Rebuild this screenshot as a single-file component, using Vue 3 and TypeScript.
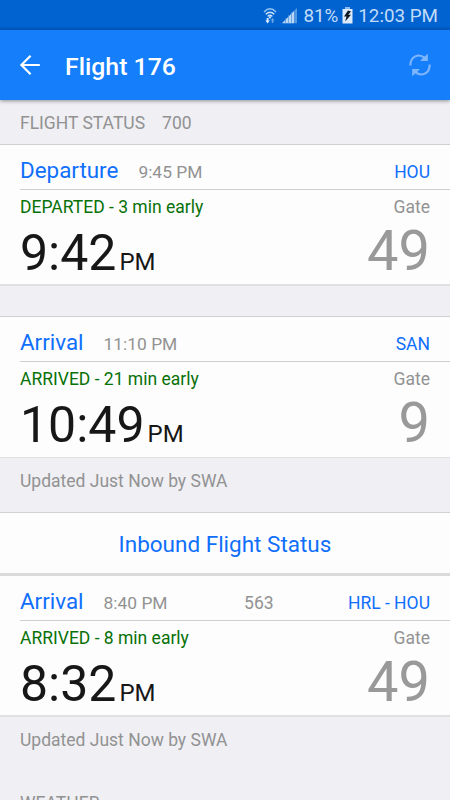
<script setup lang="ts">
interface Leg {
  kind: string
  scheduled: string
  flight?: string
  airport: string
  status: string
  time: string
  gate: string
  variant: string
}

const departure: Leg = {
  kind: 'Departure', scheduled: '9:45 PM', airport: 'HOU',
  status: 'DEPARTED - 3 min early', time: '9:42', gate: '49', variant: 'departure',
}
const arrival: Leg = {
  kind: 'Arrival', scheduled: '11:10 PM', airport: 'SAN',
  status: 'ARRIVED - 21 min early', time: '10:49', gate: '9', variant: 'arrival',
}
const inbound: Leg = {
  kind: 'Arrival', scheduled: '8:40 PM', flight: '563', airport: 'HRL - HOU',
  status: 'ARRIVED - 8 min early', time: '8:32', gate: '49', variant: 'inbound',
}

type Block =
  | { type: 'leg'; leg: Leg }
  | { type: 'gap' }
  | { type: 'note'; text: string }
  | { type: 'link'; text: string }

const blocks: Block[] = [
  { type: 'leg', leg: departure },
  { type: 'gap' },
  { type: 'leg', leg: arrival },
  { type: 'note', text: 'Updated Just Now by SWA' },
  { type: 'link', text: 'Inbound Flight Status' },
  { type: 'leg', leg: inbound },
  { type: 'note', text: 'Updated Just Now by SWA' },
]
</script>

<template>
  <div class="screen">
    <div class="status-bar">
      <svg class="wifi" width="14" height="18" viewBox="0 0 14 18" fill="none">
        <path d="M1 5Q7 -1.4 13 5" stroke="#8fc0f3" stroke-width="1.5" />
        <path d="M2.8 7.3Q7 3 11.2 7.3" stroke="#c9e2fa" stroke-width="1.5" />
        <path d="M4.7 9.4Q7 7 9.3 9.4" stroke="#c9e2fa" stroke-width="1.4" />
        <circle cx="7" cy="10.4" r="1.1" fill="#d6eafc" />
        <path d="M3.6 11h2v2.6h1.3l-2.3 2.8-2.3-2.8h1.3z" fill="#d6eafc" />
        <path d="M8.8 16h1.6v-2.4h1.2L9.6 11l-2 2.6h1.2z" fill="#68a5e8" />
      </svg>
      <svg class="signal" width="16" height="16" viewBox="0 0 16 16">
        <path d="M0 15.3 12.4 2.6v12.7z" fill="#b9d7f5" />
        <path d="M12.4 2.6 15 0v15.3h-2.6z" fill="#5598e2" />
        <path d="M3.5 10v6M6.5 7v9M9.5 4v12" stroke="#4d91df" stroke-width=".7" />
      </svg>
      <span class="percent">81%</span>
      <svg class="battery" width="11" height="17" viewBox="0 0 11 17">
        <path d="M3 0h5v2H3z" fill="#8abaf0" />
        <path d="M.5 2h10v14.5H.5z" fill="#dcebfb" />
        <path d="M6 3.5 2 9.4h2.5L3.2 14.5 9 7.7H6.2L9 4.5z" fill="#10161f" />
      </svg>
      <span class="clock">12:03 PM</span>
    </div>

    <header class="app-bar">
      <svg class="back" width="22" height="22" viewBox="0 0 22 22" fill="none" stroke="#fff" stroke-width="2.2">
        <path d="M20.8 11H2.4M11.6 1.8 2.4 11l9.2 9.2" />
      </svg>
      <h1>Flight 176</h1>
      <svg class="refresh" width="22" height="24" viewBox="0 0 22 24">
        <g fill="none" stroke="#7eb6fd" stroke-width="2.2">
          <path d="M1.3 12.6C1.3 3.2 9.6 0 15.6 4.8" />
          <path d="M20.7 11.4C20.7 20.8 12.4 24 6.4 19.2" />
        </g>
        <path d="M18.8 .8V8H11.2L13.4 5.4z" fill="#7eb6fd" />
        <path d="M3.2 23.2V16h7.6L8.6 18.6z" fill="#7eb6fd" />
      </svg>
    </header>

    <main>
      <div class="section-head"><span>FLIGHT STATUS</span><span>700</span></div>
      <template v-for="(block, i) in blocks" :key="i">
        <section v-if="block.type === 'leg'" class="leg" :class="block.leg.variant">
          <div class="leg-head">
            <span class="kind">{{ block.leg.kind }}</span>
            <span class="scheduled">{{ block.leg.scheduled }}</span>
            <span v-if="block.leg.flight" class="flight">{{ block.leg.flight }}</span>
            <span class="airport">{{ block.leg.airport }}</span>
          </div>
          <div class="leg-body">
            <div class="line">
              <span class="state">{{ block.leg.status }}</span>
              <span class="gate-label">Gate</span>
            </div>
            <div class="figures">
              <span class="time">{{ block.leg.time }}<small>PM</small></span>
              <span class="gate">{{ block.leg.gate }}</span>
            </div>
          </div>
        </section>
        <div v-else-if="block.type === 'gap'" class="gap"></div>
        <p v-else-if="block.type === 'note'" class="note">{{ block.text }}</p>
        <a v-else class="link">{{ block.text }}</a>
      </template>
      <div class="section-head weather">WEATHER</div>
    </main>
  </div>
</template>

<style>
body {
  margin: 0;
  overflow: hidden;
}
</style>

<style scoped>
.screen {
  width: 450px;
  height: 800px;
  overflow: hidden;
  background: #efeff4;
  color: #929292;
  font: 17.5px/22px Roboto, sans-serif;
  white-space: nowrap;
}
.status-bar {
  height: 30px;
  box-sizing: border-box;
  padding: 1px 12px 0 0;
  display: flex;
  align-items: center;
  justify-content: flex-end;
  background: linear-gradient(#0063d0 0 26px, #005bc2);
  color: #c3dcf7;
  font-size: 18.8px;
}
.wifi { margin-right: 5px; }
.signal { margin-right: 5px; }
.battery { margin: 0 5.5px 0 3.5px; }
.app-bar {
  position: relative;
  height: 70px;
  box-sizing: border-box;
  padding: 0 19px;
  display: flex;
  align-items: center;
  background: #157efb;
  box-shadow: 0 1px 4px rgba(0, 0, 0, .4);
}
h1 {
  flex: 1;
  margin: 4px 0 0 24px;
  color: #fff;
  font-size: 24.8px;
  font-weight: 500;
  line-height: 30px;
}
.section-head {
  height: 44px;
  box-sizing: border-box;
  padding: 12px 20px 0;
  display: flex;
  gap: 17px;
}
.leg {
  background: #fdfdfd;
  border-top: 1px solid #d0d0d2;
  border-bottom: 2px solid #e0e0e1;
}
.leg-head {
  height: 44px;
  margin-left: 20px;
  padding-right: 20px;
  display: flex;
  align-items: baseline;
  line-height: 50px;
  border-bottom: 1px solid #cfcfcf;
}
.kind {
  color: #0f6ffb;
  font-size: 22.4px;
}
.scheduled {
  margin-left: 20px;
  font-size: 17.4px;
}
.flight { margin-left: 76.5px; }
.airport {
  margin-left: auto;
  color: #0f6ffb;
}
.leg-body {
  height: 94px;
  box-sizing: border-box;
  padding: 6px 20px 0;
}
.line, .figures {
  display: flex;
  justify-content: space-between;
  align-items: baseline;
}
.state { color: #087108; }
.figures {
  height: 60px;
  line-height: 66px;
}
.time {
  color: #171717;
  font-size: 50px;
}
.time small {
  margin-left: 3px;
  font-size: 24px;
}
.gate {
  color: #999;
  font-size: 56px;
}
.gap { height: 30px; }
.arrival { border-bottom-width: 1px; }
.arrival .leg-body { height: 95px; }
.inbound { border-top: 3px solid #dadada; }
.note {
  height: 54px;
  box-sizing: border-box;
  margin: 0;
  padding-top: 12px;
  padding-left: 20px;
}
.link {
  display: block;
  height: 60px;
  border-top: 1px solid #d2d2d4;
  background: #fdfdfd;
  color: #0f6ffb;
  font-size: 22.5px;
  line-height: 63px;
  text-align: center;
}
.weather { padding-top: 21px; }
</style>
